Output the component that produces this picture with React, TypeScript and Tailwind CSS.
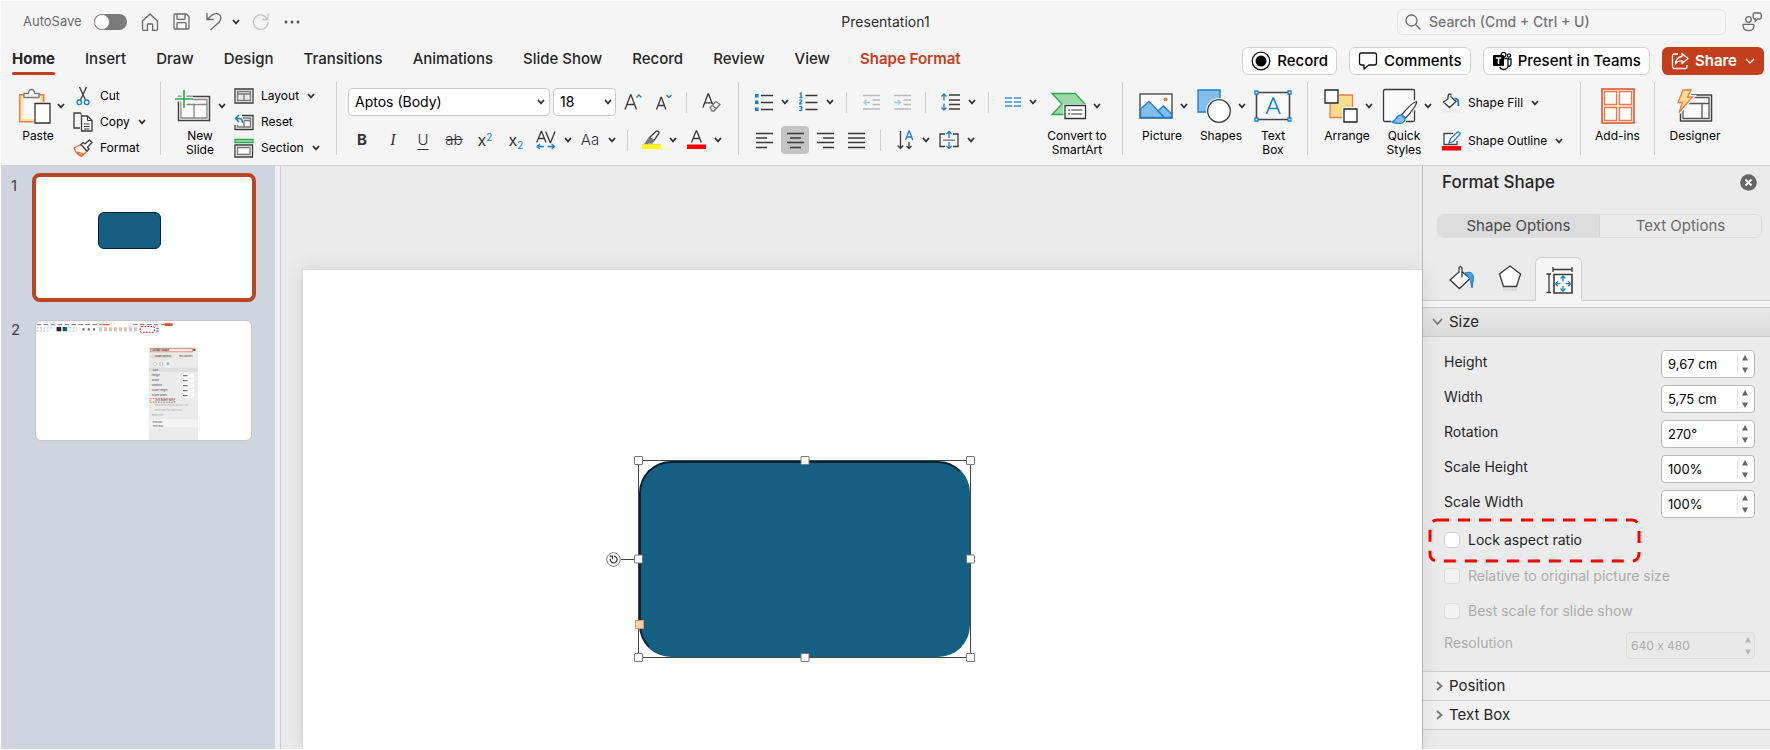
import { useState } from "react";
import type { ReactNode } from "react";

const tabs = [
  "Home",
  "Insert",
  "Draw",
  "Design",
  "Transitions",
  "Animations",
  "Slide Show",
  "Record",
  "Review",
  "View",
  "Shape Format",
];

const sizeFields = [
  { id: "height", label: "Height", value: "9,67 cm" },
  { id: "width", label: "Width", value: "5,75 cm" },
  { id: "rotation", label: "Rotation", value: "270°" },
  { id: "scale-height", label: "Scale Height", value: "100%" },
  { id: "scale-width", label: "Scale Width", value: "100%" },
];

const handles = [
  "-left-[5px] -top-[5px]",
  "left-1/2 -top-[5px] -translate-x-1/2",
  "-right-[5px] -top-[5px]",
  "-left-[5px] top-1/2 -translate-y-1/2",
  "-right-[5px] top-1/2 -translate-y-1/2",
  "-left-[5px] -bottom-[5px]",
  "left-1/2 -bottom-[5px] -translate-x-1/2",
  "-right-[5px] -bottom-[5px]",
];

type IconProps = { w: number; h: number; children: ReactNode; className?: string };

function Icon({ w, h, children, className = "" }: IconProps) {
  return (
    <svg
      width={w}
      height={h}
      viewBox={`0 0 ${w} ${h}`}
      fill="none"
      stroke="#3a3a3a"
      strokeWidth="1.3"
      className={`shrink-0 ${className}`}
      aria-hidden="true"
    >
      {children}
    </svg>
  );
}

function Chevron({ className = "" }: { className?: string }) {
  return (
    <Icon w={8} h={6} className={className}>
      <path d="M1 1l3 3.4L7 1" strokeWidth="1.8" stroke="#333" />
    </Icon>
  );
}

function Group({ children, className = "" }: { children: ReactNode; className?: string }) {
  return <div className={`flex shrink-0 ${className}`}>{children}</div>;
}

function Divider() {
  return <div className="h-[73px] w-px shrink-0 bg-[#cfcfcf]" />;
}

function SmallDivider({ className = "" }: { className?: string }) {
  return <div className={`h-[21px] w-px shrink-0 bg-[#cfcfcf] ${className}`} />;
}

function BigButton({
  icon,
  label,
  width,
  labelWidth,
  chevron = false,
  className = "",
}: {
  icon: ReactNode;
  label: string[];
  width: string;
  labelWidth: string;
  chevron?: boolean;
  className?: string;
}) {
  return (
    <button className={`flex shrink-0 flex-col items-start ${width} ${className}`}>
      <span className={`flex h-[47px] items-center gap-1.5 ${chevron ? "" : "w-full justify-center"}`}>
        {icon}
        {chevron && <Chevron />}
      </span>
      <span className={`flex flex-col items-center whitespace-nowrap text-xs leading-[14px] ${labelWidth}`}>
        {label.map((line) => (
          <span key={line}>{line}</span>
        ))}
      </span>
    </button>
  );
}

function SmallButton({ icon, label, chevron = false }: { icon: ReactNode; label: string; chevron?: boolean }) {
  return (
    <button className="flex h-[26px] items-center whitespace-nowrap text-xs">
      <span className="mr-[7px] flex w-5 justify-center">{icon}</span>
      {label}
      {chevron && <Chevron className="ml-2" />}
    </button>
  );
}

function SplitButton({ label, children, className = "" }: { label: string; children: ReactNode; className?: string }) {
  return (
    <button aria-label={label} className={`flex shrink-0 items-center gap-2 ${className}`}>
      {children}
      <Chevron />
    </button>
  );
}

function TitleBar() {
  return (
    <header className="relative flex h-[41px] items-center pr-2">
      <label htmlFor="autosave" className="ml-[22px] text-[13px] text-[#6a6a6a]">
        AutoSave
      </label>
      <span className="relative ml-3 flex h-4 w-[33px] items-center rounded-full bg-[#7a7a7a]">
        <input
          id="autosave"
          type="checkbox"
          role="switch"
          className="h-4 w-4 appearance-none rounded-full border border-[#8a8a8a] bg-white"
        />
      </span>
      <button aria-label="Home" className="ml-[14px]">
        <Icon w={18} h={18}>
          <path
            d="M1.5 8L9 1l7.5 7v8.500c0 .5-.3.8-.8.8h-4v-5.500c0-.5-.3-.8-.8-.8H7.200c-.5 0-.8.3-.8.8v5.500h-4c-.5 0-.8-.3-.8-.8z"
            stroke="#6a6a6a"
          />
        </Icon>
      </button>
      <button aria-label="Save" className="ml-[14px]">
        <Icon w={17} h={17}>
          <path
            d="M1 2c0-.6.4-1 1-1h11.500L16 3.500V15c0 .6-.4 1-1 1H2c-.6 0-1-.4-1-1zM4 1v4.500c0 .5.300.8.8.8h6.400c.5 0 .8-.3.8-.8V1M4 16v-5.500c0-.5.300-.8.8-.8h7.400c.5 0 .8.3.8.8V16"
            stroke="#6a6a6a"
          />
        </Icon>
      </button>
      <button aria-label="Undo" className="ml-4">
        <Icon w={17} h={19}>
          <path d="M1 1v6.500h6.500M1.300 7.300l4.500-4c3-2.500 7-2.300 8.500.5 1.200 2.300.6 4.300-1.300 6.400L4.500 18" stroke="#6a6a6a" />
        </Icon>
      </button>
      <button aria-label="Undo history" className="ml-[9px]">
        <Chevron />
      </button>
      <button aria-label="Redo" className="ml-3">
        <Icon w={17} h={17}>
          <path d="M15.500 6.500A7.300 7.300 0 1 0 16 9M16 .5v6h-6" stroke="#c4c4c4" />
        </Icon>
      </button>
      <button aria-label="More" className="ml-[15px]">
        <Icon w={16} h={4}>
          <g fill="#5a5a5a" stroke="none">
            <circle cx="2" cy="2" r="1.5" />
            <circle cx="8" cy="2" r="1.5" />
            <circle cx="14" cy="2" r="1.5" />
          </g>
        </Icon>
      </button>
      <h1 className="absolute left-1/2 -translate-x-1/2 text-sm text-[#2e2e2e]">Presentation1</h1>
      <label className="ml-auto flex h-[26px] w-[329px] items-center gap-2 rounded-md border border-[#e2e2e2] px-[7px]">
        <Icon w={16} h={16}>
          <circle cx="6.5" cy="6.5" r="5.5" stroke="#6a6a6a" />
          <path d="M10.500 10.500L15.500 15.500" stroke="#6a6a6a" />
        </Icon>
        <input
          type="search"
          aria-label="Search"
          placeholder="Search (Cmd + Ctrl + U)"
          className="w-full bg-transparent text-sm font-medium placeholder:text-[#757575]"
        />
      </label>
      <button aria-label="Account" className="ml-4">
        <Icon w={20} h={20}>
          <g stroke="#6a6a6a">
            <circle cx="6.5" cy="7.5" r="2.8" />
            <path d="M1 13.200c0-.6.300-.8.8-.8h9.400c.5 0 .8.2.8.8 0 3.500-2 5.500-5.500 5.500S1 16.700 1 13.200zM12.500 1h5c1 0 1.700.7 1.700 1.700v2.600c0 1-.7 1.700-1.700 1.700h-1.700l-2.600 2.300V7c-1.200 0-2-.7-2-1.700V2.700c0-1 .3-1.700 1.300-1.700z" />
          </g>
        </Icon>
      </button>
    </header>
  );
}

function TabBar() {
  const pill = "flex h-7 items-center gap-1.5 rounded-md border border-[#d2d2d2] bg-white text-[15px] font-medium text-black";
  return (
    <div className="flex h-10 items-start whitespace-nowrap">
      <nav className="ml-[11px] flex gap-[30px]">
        {tabs.map((tab, i) => (
          <a
            key={tab}
            href="#"
            className={`flex flex-col pt-[7px] text-[15px] leading-5 ${
              i === 0
                ? "font-bold text-[#262626]"
                : tab === "Shape Format"
                  ? "font-semibold text-[#c43e1c]"
                  : "font-medium text-[#262626]"
            }`}
          >
            {tab}
            {i === 0 && <span className="mt-[3px] h-[3px] rounded-full bg-[#c43e1c]" />}
          </a>
        ))}
      </nav>
      <div className="ml-auto flex gap-3 pr-1.5 pt-[5px]">
        <button className={`${pill} px-2`}>
          <Icon w={20} h={20}>
            <circle cx="10" cy="10" r="8.8" stroke="#111" />
            <circle cx="10" cy="10" r="5.5" fill="#000" stroke="none" />
          </Icon>
          Record
        </button>
        <button className={`${pill} px-2`}>
          <Icon w={20} h={20}>
            <path
              d="M3.500 2h13c1.200 0 2 .8 2 2v8c0 1.200-.8 2-2 2h-5.700L6 18v-4H3.500c-1.200 0-2-.8-2-2V4c0-1.200.8-2 2-2z"
              stroke="#111"
              strokeLinejoin="round"
            />
          </Icon>
          Comments
        </button>
        <button className={`${pill} px-2`}>
          <Icon w={20} h={20}>
            <g stroke="#111">
              <circle cx="11.5" cy="3.8" r="2.4" />
              <circle cx="17" cy="4.5" r="1.6" />
              <path d="M11 7.500h5v6.500c0 3-1.800 4.500-4.300 4.500-2 0-3.300-.8-4-2.500M16 8h3v4.500c0 2-1 3-3 3" />
            </g>
            <rect x="1" y="4" width="11" height="11" rx="1" fill="#000" stroke="none" />
            <path d="M3.800 7h5.400M6.500 7v6" stroke="#fff" strokeWidth="1.5" />
          </Icon>
          Present in Teams
        </button>
        <button className="flex h-7 items-center gap-1.5 rounded-md bg-[#c43e1c] px-[9px] text-[15px] font-semibold text-white">
          <Icon w={18} h={18}>
            <g stroke="#fff">
              <path d="M7 2H3.500C2.300 2 1.500 2.800 1.500 4v10.500c0 1.200.8 2 2 2H14c1.200 0 2-.8 2-2V13" />
              <path d="M11 1.500L17 6.500l-6 5V8.700C8 8.700 6 9.700 4.500 12c.2-4 2.500-7 6.500-7.500z" strokeLinejoin="round" />
            </g>
          </Icon>
          Share
          <Icon w={10} h={7} className="ml-0.5">
            <path d="M1 1l4 4 4-4" stroke="#fff" />
          </Icon>
        </button>
      </div>
    </div>
  );
}

function ClipboardGroup() {
  return (
    <Group className="w-[159px] pl-[17px]">
      <BigButton
        label={["Paste"]}
        width="w-[50px]"
        labelWidth="w-10"
        chevron
        icon={
          <Icon w={33} h={36}>
            <path d="M1.700 6.700h24v27h-24z" fill="#fbe3a0" stroke="#ed7d4b" strokeWidth="1.5" />
            <path d="M5 9h17v22H5z" fill="#fafafa" stroke="none" />
            <path d="M6 9.500V5.500h4.500C10.500 2.500 12 1.500 13.500 1.500s3 1 3 4H21v4z" fill="#fff" stroke="#777" />
            <path d="M15.500 14h18v22h-18z" fill="#f5f5f5" stroke="none" />
            <path d="M17 15.500h15v19.500H17z" fill="#fff" stroke="#333" />
          </Icon>
        }
      />
      <div className="ml-[5px] flex flex-col pt-px">
        <SmallButton
          label="Cut"
          icon={
            <Icon w={14} h={20}>
              <path d="M3.500 1l6 13M10.500 1l-6 13" />
              <circle cx="3.3" cy="16.3" r="2.3" stroke="#1a7fd0" />
              <circle cx="10.7" cy="16.3" r="2.3" stroke="#1a7fd0" />
            </Icon>
          }
        />
        <SmallButton
          label="Copy"
          chevron
          icon={
            <Icon w={20} h={20}>
              <path d="M7 16H1V1h6l1.500 1.500" />
              <path d="M8.500 4h6l4.500 4.500V19H8.500z" fill="#fafafa" />
              <path d="M14.500 4v4.500H19M11 12h5.500M11 14.500h5.500M11 17h5.500" strokeWidth="1" />
            </Icon>
          }
        />
        <SmallButton
          label="Format"
          icon={
            <Icon w={20} h={18}>
              <path d="M1 9l7-3.500 6 6.500-5.500 5.500C5 16 2.500 13 1 9z" fill="#fff" stroke="#e8683c" />
              <path d="M4 13l6 1.500L8.500 17z" fill="#f8c94e" stroke="#e8683c" strokeWidth="1" />
              <path d="M8 5.500l2-2 2 1.500 4.500-4L19 3.500 14.500 8l1.500 2-2 2z" fill="#fff" />
            </Icon>
          }
        />
      </div>
    </Group>
  );
}

function SlidesGroup() {
  return (
    <Group className="w-[175px] pl-[14px]">
      <BigButton
        label={["New", "Slide"]}
        width="w-[54px]"
        labelWidth="w-[50px]"
        chevron
        icon={
          <Icon w={37} h={34}>
            <path d="M3.500 7.500h31v24h-31z" fill="#fafafa" stroke="#444" strokeWidth="1.5" />
            <path d="M6 10.500h26v18.500H6zM6 15.500h26M19 15.500V29" stroke="#888" />
            <path d="M0 10h18M9 1v18" stroke="#f5f5f5" strokeWidth="5" />
            <path d="M0 10h18M9 1v18" stroke="#2fa84f" strokeWidth="1.6" />
          </Icon>
        }
      />
      <div className="ml-[5px] flex flex-col pt-px">
        <SmallButton
          label="Layout"
          chevron
          icon={
            <Icon w={20} h={16}>
              <path d="M1 1h18v14H1z" />
              <path d="M3.500 3.500h13v9h-13zM3.500 6h13M10 6v6.500" stroke="#777" fill="#e8e8e8" />
            </Icon>
          }
        />
        <SmallButton
          label="Reset"
          icon={
            <Icon w={20} h={17}>
              <path d="M8 1.500h11v14H1V11" />
              <path d="M9 4h7.500v9h-13v-2M10 6.500h6.500M10 6.500V13" stroke="#777" />
              <path d="M5 1L1.500 4.500 5 8M1.500 4.500H5c2.500 0 3.500 1.500 3.500 4.500" stroke="#1a7fd0" strokeWidth="1.5" />
            </Icon>
          }
        />
        <SmallButton
          label="Section"
          chevron
          icon={
            <Icon w={20} h={20}>
              <path d="M1 1.500h18v3H1z" fill="#a9e0b6" stroke="#2fa84f" />
              <path d="M1 7h17.500v12H1z" fill="#fafafa" />
              <path d="M3.500 9.500h12.500v7H3.500z" stroke="#777" />
            </Icon>
          }
        />
      </div>
    </Group>
  );
}

function FontGroup() {
  return (
    <Group className="w-[401px] flex-col pl-[11px]">
      <div className="flex h-10 items-center">
        <span className="relative flex items-center">
          <select
            aria-label="Font"
            className="h-7 w-[202px] appearance-none rounded border border-[#c9c9c9] bg-white px-1.5 text-sm"
          >
            <option>Aptos (Body)</option>
          </select>
          <Chevron className="pointer-events-none absolute right-[5px]" />
        </span>
        <span className="relative ml-[3px] flex items-center">
          <select
            aria-label="Font size"
            className="h-7 w-[63px] appearance-none rounded border border-[#c9c9c9] bg-white px-1.5 text-sm"
          >
            <option>18</option>
          </select>
          <Chevron className="pointer-events-none absolute right-1" />
        </span>
        <button aria-label="Increase font size" className="ml-2">
          <Icon w={18} h={18}>
            <path d="M1 16.500L6.500 2h.5l5.500 14.500M3 11.500h7.500" />
            <path d="M12.500 4.500L15 2l2.500 2.500" stroke="#1a7fd0" />
          </Icon>
        </button>
        <button aria-label="Decrease font size" className="ml-[13px]">
          <Icon w={18} h={18}>
            <path d="M1.500 16.500L6 4.500h.4l4.500 12M3.300 12.500h6" />
            <path d="M11.500 2L14 4.500 16.500 2" stroke="#1a7fd0" />
          </Icon>
        </button>
        <SmallDivider className="ml-[13px]" />
        <button aria-label="Clear formatting" className="ml-[15px]">
          <Icon w={19} h={19}>
            <path d="M1 14.500L6 1h.5l4 10M2.800 9.800H10" />
            <path d="M8 14.500l6-6 4 3-6 6.500H10z" fill="#f5f5f5" stroke="#777" />
            <path d="M10.500 12.500l3.500 3" stroke="#777" />
          </Icon>
        </button>
      </div>
      <div className="flex h-9 items-center pl-1 text-base text-[#333]">
        <button aria-label="Bold" className="w-5 text-[15px] font-bold">
          B
        </button>
        <button aria-label="Italic" className="ml-[11px] w-5 font-['Liberation_Serif',serif] italic">
          I
        </button>
        <button aria-label="Underline" className="ml-[10px] w-5 text-[15px] font-light underline underline-offset-4">
          U
        </button>
        <button aria-label="Strikethrough" className="ml-[11px] w-5 text-[15px] font-light line-through">
          ab
        </button>
        <button aria-label="Superscript" className="ml-[11px] w-5">
          x<sup className="text-[10px] text-[#1a7fd0]">2</sup>
        </button>
        <button aria-label="Subscript" className="ml-[11px] w-5">
          x<sub className="text-[10px] text-[#1a7fd0]">2</sub>
        </button>
        <SplitButton label="Character spacing" className="ml-[10px]">
          <Icon w={20} h={20}>
            <path d="M.7 12.500L5.200 1.500h.4l4.400 11M2.500 8.500h5.800M9.700 1.500l4.500 11h.3l4.500-11" />
            <path d="M8 16.500H1M4 14l-2.800 2.500L4 19M11.500 16.500h7M15.700 14l2.800 2.500-2.800 2.500" stroke="#1a7fd0" />
          </Icon>
        </SplitButton>
        <SplitButton label="Change case" className="ml-2">
          <span className="w-5 text-[15px] font-light">Aa</span>
        </SplitButton>
        <SmallDivider className="ml-[11px]" />
        <SplitButton label="Highlight" className="ml-[14px]">
          <Icon w={19} h={20}>
            <path d="M7.500 7.500l7-6.500c1-.6 3 1 2.500 2.200l-5 7.300z" fill="#fff" />
            <path d="M7.500 7.500l4.500 3-2 2.500-2.500-.3L3 14z" fill="#777" stroke="#777" />
            <path d="M0 14.500h19V19H0z" fill="#ffff00" stroke="none" />
            <path d="M0 14.500h19" stroke="#f5d95a" strokeWidth="1" />
          </Icon>
        </SplitButton>
        <SplitButton label="Font color" className="ml-[10px]">
          <Icon w={19} h={20}>
            <path d="M4.500 12.500L9.200 1h.5l4.700 11.500M6.300 8.500h6.300" />
            <path d="M0 14.500h19V19H0z" fill="#f00" stroke="none" />
          </Icon>
        </SplitButton>
      </div>
    </Group>
  );
}

function ParagraphGroup() {
  return (
    <Group className="w-[383px]">
      <div className="flex w-[306px] flex-col pl-4">
        <div className="flex h-10 items-center">
          <SplitButton label="Bullets">
            <Icon w={18} h={18}>
              <path d="M6 2.500h12M6 9.500h12M6 16.500h12" />
              <path d="M0 1h3.500v3.500H0zM0 7.500h3.500V11H0zM0 14.500h3.500V18H0z" fill="#1a7fd0" stroke="none" />
            </Icon>
          </SplitButton>
          <SplitButton label="Numbering" className="ml-[10px]">
            <Icon w={19} h={20}>
              <path d="M6.500 3.500h12M6.500 10.500h12M6.500 17.500h12" />
              <path
                d="M.8 2l1.200-1v4.500M.5 5.500h3M.5 8.500c.5-.8 2.300-.8 2.300.3 0 1-2.200 1.700-2.200 3h2.600M.5 14.800c.5-.7 2.300-.6 2.300.5 0 .8-.6 1-1.200 1 .7 0 1.400.300 1.400 1.200 0 1.200-2 1.300-2.500.5"
                stroke="#1a7fd0"
              />
            </Icon>
          </SplitButton>
          <SmallDivider className="ml-3" />
          <button aria-label="Decrease indent" className="ml-4">
            <Icon w={17} h={17}>
              <path d="M0 1.500h17M9.500 6h7.500M9.500 10.500h7.500M0 15h17" stroke="#b9b9b9" />
              <path d="M7 8.500H1M3.500 6L1 8.500 3.500 11" stroke="#9ccbeb" />
            </Icon>
          </button>
          <button aria-label="Increase indent" className="ml-[14px]">
            <Icon w={17} h={17}>
              <path d="M0 1.500h17M9.500 6h7.500M9.500 10.500h7.500M0 15h17" stroke="#b9b9b9" />
              <path d="M0 8.500h6.500M4 6l2.500 2.500L4 11" stroke="#9ccbeb" />
            </Icon>
          </button>
          <SmallDivider className="ml-[14px]" />
          <SplitButton label="Line spacing" className="ml-[15px]">
            <Icon w={19} h={18}>
              <path d="M8 2h11M8 7h11M8 11.500h11M8 16h11" />
              <path d="M3 1v6.500M.5 3.500L3 1l2.500 2.500M3 10.500V17M.5 14.500L3 17l2.500-2.500" stroke="#1a7fd0" />
            </Icon>
          </SplitButton>
          <SmallDivider className="ml-3" />
          <SplitButton label="Columns" className="ml-4">
            <Icon w={16} h={12}>
              <path d="M0 2h7M0 6h7M0 10h7M9 2h7M9 6h7M9 10h7" stroke="#3c93d8" strokeWidth="1.5" />
            </Icon>
          </SplitButton>
        </div>
        <div className="flex h-9 items-center">
          <button aria-label="Align left" className="ml-px">
            <Icon w={17} h={17}>
              <path d="M0 1.500h17M0 6h11M0 10.500h17M0 15.500h11" />
            </Icon>
          </button>
          <button
            aria-label="Align center"
            className="ml-2 flex h-7 w-7 items-center justify-center rounded bg-[#c4c4c4]"
          >
            <Icon w={17} h={17}>
              <path d="M0 1.500h17M3 6h11M0 10.500h17M3 15.500h11" />
            </Icon>
          </button>
          <button aria-label="Align right" className="ml-2">
            <Icon w={17} h={17}>
              <path d="M0 1.500h17M6 6h11M0 10.500h17M6 15.500h11" />
            </Icon>
          </button>
          <button aria-label="Justify" className="ml-[14px]">
            <Icon w={17} h={17}>
              <path d="M0 1.500h17M0 6h17M0 10.500h17M0 15.500h17" />
            </Icon>
          </button>
          <SmallDivider className="ml-[15px]" />
          <SplitButton label="Text direction" className="ml-4">
            <Icon w={17} h={20}>
              <path d="M3.500 1v17.500M.8 15.500l2.700 3 2.700-3M12 12v6.500M9.500 16l2.500 2.500 2.500-2.500" />
              <path d="M8.500 10L12 1h.3l3.500 9M9.700 7h5" stroke="#1a7fd0" />
            </Icon>
          </SplitButton>
          <SplitButton label="Align text" className="ml-[9px]">
            <Icon w={20} h={20}>
              <path d="M6 4H1v12.500h5M14 4h5v12.500h-5" />
              <path d="M4 10.200h12" stroke="#777" />
              <path d="M10 1v7M7.500 4L10 1.500 12.500 4M10 12v7M7.500 16l2.500 2.500 2.500-2.500" stroke="#1a7fd0" />
            </Icon>
          </SplitButton>
        </div>
      </div>
      <BigButton
        label={["Convert to", "SmartArt"]}
        width="w-[64px]"
        labelWidth="w-[64px]"
        chevron
        icon={
          <Icon w={42} h={28}>
            <path d="M7 1.500h23l10 10.500-10 10.500H7L17 12z" fill="#9bdaa6" stroke="#2fa84f" />
            <path d="M18.500 12h22v16h-22z" fill="#f5f5f5" stroke="none" />
            <path d="M20 13.500h20.500v13H20z" fill="#fff" stroke="#333" />
            <path d="M23 18h2M26.500 18h11M23 22h2M26.500 22h11" stroke="#777" />
          </Icon>
        }
      />
    </Group>
  );
}

function InsertGroup() {
  return (
    <Group className="w-[184px] pl-4">
      <BigButton
        label={["Picture"]}
        width="w-[50px]"
        labelWidth="w-[46px]"
        chevron
        icon={
          <Icon w={35} h={26}>
            <path d="M1 1h32v24H1z" fill="#fafafa" stroke="#555" strokeWidth="1.5" />
            <path d="M1.500 16L10 8.500l15.500 16H1.500z" fill="#83beec" stroke="#1a7fd0" />
            <path d="M19 18l5.500-5 8 8v3.500h-7z" fill="#83beec" stroke="#1a7fd0" />
            <circle cx="26.5" cy="6.5" r="2" fill="#ed7d4b" stroke="none" />
          </Icon>
        }
      />
      <BigButton
        label={["Shapes"]}
        width="w-[50px]"
        labelWidth="w-12"
        className="ml-2"
        chevron
        icon={
          <Icon w={35} h={34}>
            <path d="M1 1h22v22H1z" fill="#83beec" stroke="#1a7fd0" />
            <circle cx="22" cy="22" r="13" fill="#f5f5f5" stroke="none" />
            <circle cx="22" cy="22" r="11.3" fill="#fff" />
          </Icon>
        }
      />
      <BigButton
        label={["Text", "Box"]}
        width="w-[38px]"
        labelWidth="w-[38px]"
        className="ml-[7px]"
        icon={
          <Icon w={38} h={32}>
            <path d="M2.500 2.500h33v27h-33z" fill="#fafafa" stroke="#444" strokeWidth="1.6" />
            <path d="M12.500 24L19 8h.5L26 24M15 18.500h8.500" stroke="#1a7fd0" strokeWidth="1.7" />
            <path d="M1 1h3v3H1zM34 1h3v3h-3zM1 28h3v3H1zM34 28h3v3h-3z" fill="#fff" stroke="#1a7fd0" />
          </Icon>
        }
      />
    </Group>
  );
}

function DrawingGroup() {
  return (
    <Group className="w-[272px] pl-4">
      <BigButton
        label={["Arrange"]}
        width="w-[50px]"
        labelWidth="w-[46px]"
        chevron
        icon={
          <Icon w={35} h={34}>
            <path d="M6 6h22.500v22.500H6z" fill="#fadd8c" stroke="#ed7d4b" />
            <path d="M-1-1h16v16H-1zM18 18h17v17H18z" fill="#f5f5f5" stroke="none" />
            <path d="M1 1h13v13H1zM20 20h13v13H20z" fill="#fff" stroke="#222" />
          </Icon>
        }
      />
      <BigButton
        label={["Quick", "Styles"]}
        width="w-[49px]"
        labelWidth="w-[44px]"
        className="ml-2"
        chevron
        icon={
          <Icon w={36} h={36}>
            <path
              d="M9 33.500H3c-1 0-1.500-.5-1.500-1.500V3c0-1 .5-1.500 1.500-1.500h28c1 0 1.500.5 1.500 1.500v29c0 1-.5 1.500-1.500 1.500h-7"
              fill="#fafafa"
            />
            <path d="M20 27.500C24 22 30 15 34.500 13.500c1 1.500-5 11-11 16.500z" fill="#fff" stroke="#f5f5f5" strokeWidth="4" />
            <path d="M19.500 27C24 21.500 31 14.500 34.500 13.500c1 1.500-5 11-11 16.500z" fill="#fff" />
            <path d="M10 34c3-.5 3.500-3 5-5s4.500-2.500 6.500-.5 2 4.500-.5 6-7.500 1.200-11-.5z" fill="#83beec" stroke="#1a7fd0" />
          </Icon>
        }
      />
      <div className="ml-[11px] flex flex-col">
        <button className="flex h-[41px] items-center whitespace-nowrap text-xs">
          <Icon w={20} h={20}>
            <path d="M9 2.500V1.300c-1.800-.8-2.800 0-3 2.200v2.500L1.500 9 7.500 14.500 14 8.500 8.500 3.500" fill="#fff" />
            <path d="M12.500 5.500c3 0 4.500 2 3.800 7.500" stroke="#1a7fd0" strokeWidth="2" />
            <path d="M0 16h19v3.500H0z" fill="#ededed" stroke="none" />
          </Icon>
          <span className="ml-1.5">Shape Fill</span>
          <Chevron className="ml-2" />
        </button>
        <button className="flex h-9 items-center whitespace-nowrap text-xs">
          <Icon w={20} h={20}>
            <path d="M11 2.500H2v11h13V10" fill="#fff" stroke="#444" />
            <path d="M7 12l1.500-4.500L15.500 1c1-.5 3 1 2.500 2.200L11.500 10.500z" fill="#fff" stroke="#1a7fd0" />
            <path d="M0 15h19v4.500H0z" fill="#f00" stroke="none" />
          </Icon>
          <span className="ml-1.5">Shape Outline</span>
          <Chevron className="ml-2" />
        </button>
      </div>
    </Group>
  );
}

function Ribbon() {
  return (
    <div className="flex h-[84px] items-start border-b border-[#cfcfcf] text-black">
      <ClipboardGroup />
      <Divider />
      <SlidesGroup />
      <Divider />
      <FontGroup />
      <Divider />
      <ParagraphGroup />
      <Divider />
      <InsertGroup />
      <Divider />
      <DrawingGroup />
      <Divider />
      <BigButton
        label={["Add-ins"]}
        width="w-[73px]"
        labelWidth="w-full"
        icon={
          <Icon w={34} h={36}>
            <path d="M1 1h32v34H1z" stroke="#d8512c" fill="#fde9e0" strokeWidth="1.5" />
            <path
              d="M3.500 3.500h12v13h-12zM18.500 3.500h12v13h-12zM3.500 19.500h12v13h-12zM18.500 19.500h12v13h-12z"
              fill="#fff"
              stroke="#ed7d4b"
            />
          </Icon>
        }
      />
      <Divider />
      <BigButton
        label={["Designer"]}
        width="w-[80px]"
        labelWidth="w-full"
        icon={
          <Icon w={36} h={34}>
            <path d="M3.500 6h31v26h-31z" fill="#fafafa" stroke="#444" strokeWidth="1.5" />
            <path d="M6 8.500h26v21H6zM10 14.500h22M25 14.500v15" stroke="#555" />
            <path d="M6 1h8l-3.500 7h5L2 23.500l3.500-10H1z" fill="#fadd8c" stroke="#f5f5f5" strokeWidth="4" />
            <path d="M6 1h8l-3.500 7h5L2 23.500l3.500-10H1z" fill="#fadd8c" stroke="#ed7d4b" />
          </Icon>
        }
      />
    </div>
  );
}

function MiniSlide() {
  const rows = ["Height", "Width", "Rotation", "Scale Height", "Scale Width"];
  return (
    <svg viewBox="0 0 648 363" className="block w-full" fontSize="8" fill="#444" aria-hidden="true">
      <path d="M0 3h60M190 3h24M330 3h40" stroke="#aaa" strokeWidth="2" strokeDasharray="6 4" />
      <path d="M2 11h196M292 11h98" stroke="#777" strokeWidth="3" strokeDasharray="14 7" />
      <path d="M200 11h22" stroke="#e8683c" strokeWidth="4" />
      <path d="M388 7h24v8h-24z" fill="#d8512c" />
      <path d="M2 21h50M2 30h40M100 21h24M100 30h24" stroke="#a9bccb" strokeWidth="3" strokeDasharray="6 4" />
      <path d="M62 18h14v13H62z" fill="#222" />
      <path d="M80 18h14v13H80z" fill="#156082" />
      <path d="M140 25h42" stroke="#666" strokeWidth="7" strokeDasharray="6 10" />
      <path d="M190 25h115" stroke="#d9c3b5" strokeWidth="12" strokeDasharray="9 6" />
      <path d="M362 22h8M362 31h8" stroke="#888" strokeWidth="4" />
      <rect x="314" y="17" width="43" height="17" rx="4" fill="#fff" stroke="#f00" strokeWidth="3" strokeDasharray="5 4" />
      <rect x="340" y="78" width="148" height="285" fill="#ebebeb" />
      <rect x="346" y="83" width="125" height="10" fill="none" stroke="#e8684c" strokeWidth="2" />
      <text x="348" y="91" fontWeight="bold">
        Format Shape
      </text>
      <circle cx="477" cy="87" r="4" fill="#666" />
      <rect x="346" y="102" width="66" height="10" fill="#dcdcdc" />
      <text x="358" y="110" fontSize="7">
        Shape Options
      </text>
      <text x="430" y="110" fontSize="7">
        Text Options
      </text>
      <path d="M353 130l5-6 6 6-6 5zM374 124h7v11h-7z" fill="#fff" stroke="#888" />
      <path d="M390 121h15v17h-15z" fill="#fff" />
      <path d="M393 124h9v9h-9z" fill="#83beec" />
      <rect x="340" y="141" width="148" height="12" fill="#dedede" />
      <text x="352" y="150">
        Size
      </text>
      {rows.map((row, i) => (
        <g key={row}>
          <text x="349" y={167 + i * 15}>
            {row}
          </text>
          <rect x="441" y={159 + i * 15} width="36" height="11" fill="#fff" />
          <path d={`M443 ${165 + i * 15}h14`} stroke="#555" strokeWidth="3" />
        </g>
      ))}
      <rect x="344" y="234" width="73" height="11" fill="none" stroke="#f0402c" strokeWidth="2" strokeDasharray="5 3" />
      <text x="358" y="242" fontSize="7">
        Lock aspect ratio
      </text>
      <g fill="#aaa" fontSize="7">
        <text x="358" y="257">
          Relative to original picture size
        </text>
        <text x="358" y="272">
          Best scale for slide show
        </text>
        <text x="349" y="287">
          Resolution
        </text>
      </g>
      <path d="M340 297h148v24H340z" fill="#f4f4f4" />
      <text x="351" y="306">
        Position
      </text>
      <text x="351" y="318">
        Text Box
      </text>
    </svg>
  );
}

function SlideList() {
  return (
    <aside className="flex w-[274px] shrink-0 flex-col gap-[14px] bg-[#ced4e0] pl-[10px] pt-[7px] text-[15px] text-[#444]">
      <div className="flex">
        <span className="w-[21px] pt-0.5">1</span>
        <button aria-label="Slide 1" className="relative block h-[129px] w-56 rounded-lg border-4 border-[#b94522] bg-white">
          <span className="absolute left-[62px] top-[35px] h-[37px] w-[63px] rounded-md border border-[#042433] bg-[#156082]" />
        </button>
      </div>
      <div className="flex">
        <span className="w-6 pt-[3px]">2</span>
        <button
          aria-label="Slide 2"
          className="mt-1 block h-[121px] w-[217px] overflow-hidden rounded-md border border-[#c4c4c4] bg-white"
        >
          <MiniSlide />
        </button>
      </div>
    </aside>
  );
}

function Canvas() {
  return (
    <main className="flex min-w-0 flex-1 border-l border-[#cfcfcf] bg-[#ebebeb] pl-[21px] pt-[103px]">
      <div className="relative flex-1 border-l border-t border-[#dcdcdc] bg-white shadow-[0_0_20px_rgba(0,0,0,0.1)]">
        <div className="absolute left-[335px] top-[190px] h-[198px] w-[333px] border border-[#444]">
          <div className="h-full w-full rounded-[32px] border-2 border-[#042433] border-b-[#156082] border-r-[#156082] bg-[#156082]" />
          <span className="absolute -left-[18px] top-1/2 h-px w-[18px] bg-[#444]" />
          {handles.map((place) => (
            <span key={place} className={`absolute h-[9px] w-[9px] rounded-[1px] border border-[#777] bg-white ${place}`} />
          ))}
          <span className="absolute -left-1 bottom-[28px] h-[9px] w-[9px] border border-[#e0936c] bg-[#fbd3a8]" />
          <Icon w={15} h={15} className="absolute -left-[33px] top-[91px]">
            <circle cx="7.5" cy="7.5" r="6.8" fill="#fff" stroke="#777" strokeWidth="1" />
            <path d="M8 4.200a3.400 3.400 0 1 1-3.600 2.600M3.500 4.200h3v3" stroke="#333" strokeWidth="1.2" />
          </Icon>
        </div>
      </div>
    </main>
  );
}

function SpinArrows({ color }: { color: string }) {
  return (
    <Icon w={6} h={18}>
      <path d="M0 5.500L3 0l3 5.500zM0 12.500L3 18l3-5.500z" fill={color} stroke="none" />
    </Icon>
  );
}

function FormatPanel() {
  const [values, setValues] = useState(sizeFields.map((f) => f.value));
  const [locked, setLocked] = useState(false);

  return (
    <aside className="flex w-[348px] shrink-0 flex-col border-l border-[#bdbdbd] bg-[#ebebeb] text-sm text-[#262626]">
      <div className="flex h-8 items-center justify-between pl-[19px] pr-[13px]">
        <h2 className="text-[17px] font-medium">Format Shape</h2>
        <button aria-label="Close">
          <Icon w={17} h={17}>
            <circle cx="8.5" cy="8.5" r="8.3" fill="#666" stroke="none" />
            <path d="M5.500 5.500l6 6M11.500 5.500l-6 6" stroke="#fff" strokeWidth="1.8" />
          </Icon>
        </button>
      </div>
      <div className="ml-[14px] mr-2 mt-4 flex h-6 rounded-md border border-[#dedede] text-[15px]">
        <button className="flex-1 rounded-l-[5px] bg-[#dcdcdc] text-[#4a4a4a]">Shape Options</button>
        <button className="flex-1 border-l border-[#d2d2d2] text-[#6a6a6a]">Text Options</button>
      </div>
      <div className="mt-[18px] flex h-[45px] border-b border-[#cfcfcf] pl-[26px]">
        <button aria-label="Fill and line">
          <Icon w={26} h={26}>
            <path d="M13 12.500V3.500C13 1 10 1 10 3v4L1 15l9.500 8.500L21 13.500 13.500 7" fill="#fff" />
            <path d="M16 8c5-2 9 0 8.500 5.500L23 23c-1-3-1-6-2.500-9.500z" fill="#4a9fe0" stroke="#1a7fd0" strokeWidth="1" />
          </Icon>
        </button>
        <button aria-label="Effects" className="ml-[23px]">
          <Icon w={24} h={28}>
            <path d="M12 2l10.500 8-4 12.500h-13L1.500 10z" fill="#fff" />
            <path d="M5 24.500h14v2.500H5z" fill="#d9d9d9" stroke="none" />
          </Icon>
        </button>
        <button
          aria-label="Size and properties"
          className="relative top-px ml-[13px] flex w-[47px] items-center justify-center rounded-t-md border border-b-0 border-[#cfcfcf] bg-[#f5f5f5]"
        >
          <Icon w={28} h={28}>
            <path d="M9 8.500h18V27H9z" fill="#fff" strokeWidth="1.6" />
            <path d="M8 3.500h19M8 1v5M27 1v5M4 8v18.500M1.500 8H6M1.500 26.500H6" />
            <path
              d="M18 15.500v-5M15.500 12.500l2.500-2.500 2.500 2.500M18 20v5M15.500 22.500l2.500 2.500 2.500-2.500M15.500 17.700h-5M13 15.200l-2.500 2.500 2.500 2.500M20.500 17.700h5M23 15.200l2.500 2.500-2.500 2.500"
              stroke="#1a7fd0"
            />
          </Icon>
        </button>
      </div>
      <div className="h-1.5 bg-[#f5f5f5]" />
      <button className="flex h-[30px] items-center gap-1.5 border-y border-[#c9c9c9] bg-linear-to-b from-[#e9e9e9] to-[#dcdcdc] pl-[9px] text-left text-[15px]">
        <Icon w={11} h={8}>
          <path d="M1 1l4.500 5L10 1" stroke="#777" strokeWidth="1.8" />
        </Icon>
        Size
      </button>
      <div className="flex flex-col gap-[7px] pb-[13px] pl-[21px] pr-[15px] pt-[13px]">
        {sizeFields.map((field, i) => (
          <div key={field.id} className="flex h-7 items-center justify-between">
            <label htmlFor={field.id} className="pb-1">
              {field.label}
            </label>
            <span className="flex h-7 w-[94px] items-center rounded border border-[#b9b9b9] bg-white pr-1.5">
              <input
                id={field.id}
                value={values[i]}
                onChange={(event) => setValues(values.map((v, n) => (n === i ? event.target.value : v)))}
                className="w-full min-w-0 flex-1 pl-1.5 text-[13px] text-black"
              />
              <span className="mr-1 h-5 w-px bg-[#e2e2e2]" />
              <SpinArrows color="#666" />
            </span>
          </div>
        ))}
        <div className="relative flex h-7 items-center">
          <svg className="absolute -left-4 -top-[7px] h-[46px] w-[214px] overflow-visible" fill="none" aria-hidden="true">
            <rect x="2" y="2" width="209" height="41" rx="7" stroke="#f00" strokeWidth="3" strokeDasharray="12 9" />
          </svg>
          <label className="flex items-center gap-2 pt-0.5">
            <input
              type="checkbox"
              checked={locked}
              onChange={(event) => setLocked(event.target.checked)}
              className="h-4 w-4 appearance-none rounded border border-[#cfcfcf] bg-white"
            />
            Lock aspect ratio
          </label>
        </div>
        {["Relative to original picture size", "Best scale for slide show"].map((text) => (
          <label key={text} className="flex h-7 items-center gap-2 pt-1 text-[#adadad]">
            <input
              type="checkbox"
              disabled
              className="h-4 w-4 appearance-none rounded border border-[#dcdcdc] bg-[#f2f2f2]"
            />
            {text}
          </label>
        ))}
        <div className="flex h-[29px] items-end justify-between text-[#adadad]">
          <label htmlFor="resolution" className="pb-1.5">
            Resolution
          </label>
          <span className="relative flex items-center">
            <select
              id="resolution"
              disabled
              className="h-[27px] w-[129px] appearance-none rounded border border-[#dcdcdc] bg-[#e9e9e9] pl-1 text-xs text-[#adadad] opacity-100 [font-feature-settings:'calt'_0]"
            >
              <option>640 x 480</option>
            </select>
            <span className="pointer-events-none absolute right-1">
              <SpinArrows color="#b5b5b5" />
            </span>
          </span>
        </div>
      </div>
      {["Position", "Text Box"].map((section) => (
        <button
          key={section}
          className="-mt-px flex h-[30px] items-center gap-1.5 border-y border-[#cfcfcf] bg-[#f1f1f1] pl-[13px] text-left text-[15px]"
        >
          <Icon w={7} h={10}>
            <path d="M1 1l4.500 4L1 9" stroke="#777" strokeWidth="1.8" />
          </Icon>
          {section}
        </button>
      ))}
    </aside>
  );
}

export default function App() {
  return (
    <div className="flex min-h-screen flex-col overflow-hidden border-y border-l border-white bg-[#f5f5f5] font-['Inter','Liberation_Sans',sans-serif]">
      <TitleBar />
      <TabBar />
      <Ribbon />
      <div className="flex flex-1">
        <SlideList />
        <div className="w-[5px] shrink-0 bg-[#f0f0f0]" />
        <Canvas />
        <FormatPanel />
      </div>
    </div>
  );
}
